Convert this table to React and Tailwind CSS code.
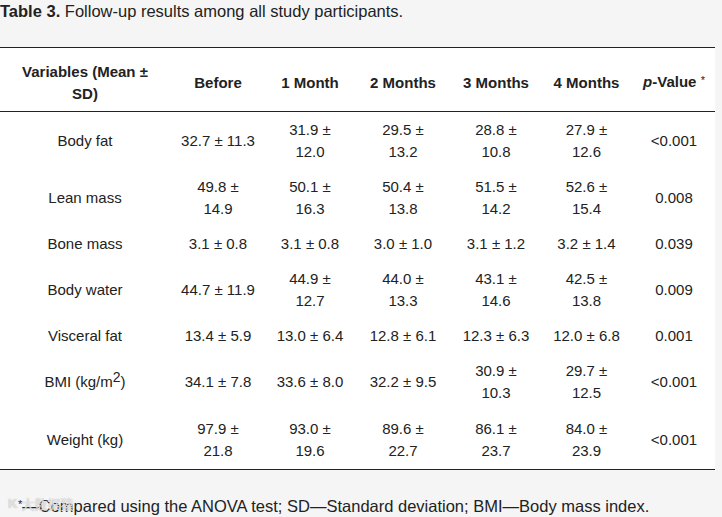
const cols = "grid grid-cols-[170px_96px_88px_98px_88px_93px_82px]";

const rows = [
  { name: "Body fat", h: "h-[57px]", cells: [["32.7 ± 11.3"], ["31.9 ±", "12.0"], ["29.5 ±", "13.2"], ["28.8 ±", "10.8"], ["27.9 ±", "12.6"], ["<0.001"]] },
  { name: "Lean mass", h: "h-[57px]", cells: [["49.8 ±", "14.9"], ["50.1 ±", "16.3"], ["50.4 ±", "13.8"], ["51.5 ±", "14.2"], ["52.6 ±", "15.4"], ["0.008"]] },
  { name: "Bone mass", h: "h-[35px]", cells: [["3.1 ± 0.8"], ["3.1 ± 0.8"], ["3.0 ± 1.0"], ["3.1 ± 1.2"], ["3.2 ± 1.4"], ["0.039"]] },
  { name: "Body water", h: "h-[58px]", cells: [["44.7 ± 11.9"], ["44.9 ±", "12.7"], ["44.0 ±", "13.3"], ["43.1 ±", "14.6"], ["42.5 ±", "13.8"], ["0.009"]] },
  { name: "Visceral fat", h: "h-[34px]", cells: [["13.4 ± 5.9"], ["13.0 ± 6.4"], ["12.8 ± 6.1"], ["12.3 ± 6.3"], ["12.0 ± 6.8"], ["0.001"]] },
  { name: "BMI", h: "h-[58px]", cells: [["34.1 ± 7.8"], ["33.6 ± 8.0"], ["32.2 ± 9.5"], ["30.9 ±", "10.3"], ["29.7 ±", "12.5"], ["<0.001"]] },
  { name: "Weight (kg)", h: "h-[58px]", cells: [["97.9 ±", "21.8"], ["93.0 ±", "19.6"], ["89.6 ±", "22.7"], ["86.1 ±", "23.7"], ["84.0 ±", "23.9"], ["<0.001"]] },
];

function Cell({ lines }) {
  return (
    <div className="flex flex-col items-center justify-center whitespace-nowrap leading-[22px]">
      {lines.map((line) => (
        <span key={line}>{line}</span>
      ))}
    </div>
  );
}

export default function App() {
  return (
    <div className="relative h-[517px] w-[722px] overflow-hidden bg-[#f5f5f5] font-['Liberation_Sans',Arial,sans-serif] text-[#222]">
      <p className="text-[16.5px] leading-[22px]">
        <span className="font-bold">Table 3.</span> Follow-up results among all study participants.
      </p>

      <div className="mt-[25px] w-[715px] border-y border-[#222] bg-white text-[15px]">
        <div className={`${cols} h-[64px] border-b border-[#222] pt-[6px] font-bold`}>
          <Cell lines={["Variables (Mean ±", "SD)"]} />
          <Cell lines={["Before"]} />
          <Cell lines={["1 Month"]} />
          <Cell lines={["2 Months"]} />
          <Cell lines={["3 Months"]} />
          <Cell lines={["4 Months"]} />
          <div className="flex items-center justify-center whitespace-nowrap">
            <span>
              <i>p</i>-Value <span className="relative top-[-3px] text-[11px] font-normal">*</span>
            </span>
          </div>
        </div>
        {rows.map((row) => (
          <div key={row.name} className={`${cols} ${row.h}`}>
            {row.name === "BMI" ? (
              <div className="flex items-center justify-center whitespace-nowrap">
                <span>
                  BMI (kg/m<span className="relative top-[-5px] text-[14px]">2</span>)
                </span>
              </div>
            ) : (
              <Cell lines={[row.name]} />
            )}
            {row.cells.map((lines, i) => (
              <Cell key={i} lines={lines} />
            ))}
          </div>
        ))}
      </div>

      <p className="mt-[25px] pl-[18px] text-[16.5px] leading-[22px]">
        <span className="relative top-[-4px] text-[11px]">*</span>—Compared using the ANOVA test; SD—Standard deviation; BMI—Body mass index.
      </p>

      {/* faint watermark over the footnote */}
      <div className="absolute left-[8px] top-[494px] flex items-center gap-[4px] text-[13px] text-white/70 [text-shadow:0_0_1px_#999]">
        <span className="font-bold">K</span>
        <span className="font-['Noto_Sans_CJK_SC',sans-serif]">大数据猿</span>
      </div>
    </div>
  );
}
